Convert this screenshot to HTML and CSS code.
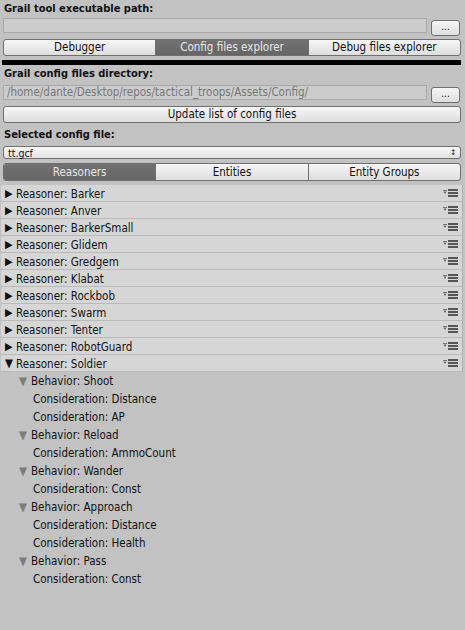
FILE: index.html
```html
<!DOCTYPE html>
<html>
<head>
<meta charset="utf-8">
<link rel="stylesheet" href="styles.css">
</head>
<body>
<div class="page">
  <div class="label lbl1">Grail tool executable path:</div>
  <div class="pathrow r1">
    <div class="field"></div>
    <div class="btn small">...</div>
  </div>
  <div class="toolbar tb1">
    <div class="seg first">Debugger</div>
    <div class="seg on">Config files explorer</div>
    <div class="seg last">Debug files explorer</div>
  </div>
  <div class="blackbar"></div>
  <div class="label lbl2">Grail config files directory:</div>
  <div class="pathrow r2">
    <div class="field dim">/home/dante/Desktop/repos/tactical_troops/Assets/Config/</div>
    <div class="btn small">...</div>
  </div>
  <div class="btn wide">Update list of config files</div>
  <div class="label lbl3">Selected config file:</div>
  <div class="dropdown"><span>tt.gcf</span><span class="arrows">&#8597;</span></div>
  <div class="toolbar tb2">
    <div class="seg first on">Reasoners</div>
    <div class="seg">Entities</div>
    <div class="seg last">Entity Groups</div>
  </div>
  <div class="list">
    <div class="row"><span class="tri">&#9654;</span><span class="name">Reasoner: Barker</span><svg class="menu" width="15" height="8" viewBox="0 0 15 8"><rect x="0" y="1" width="4" height="1" fill="#777"/><path d="M0.5 2.5H3.5L2 5Z" fill="#666"/><rect x="5" y="0" width="10" height="2" fill="#555"/><rect x="5" y="3" width="10" height="2" fill="#555"/><rect x="5" y="6" width="10" height="2" fill="#555"/></svg></div>
    <div class="row"><span class="tri">&#9654;</span><span class="name">Reasoner: Anver</span><svg class="menu" width="15" height="8" viewBox="0 0 15 8"><rect x="0" y="1" width="4" height="1" fill="#777"/><path d="M0.5 2.5H3.5L2 5Z" fill="#666"/><rect x="5" y="0" width="10" height="2" fill="#555"/><rect x="5" y="3" width="10" height="2" fill="#555"/><rect x="5" y="6" width="10" height="2" fill="#555"/></svg></div>
    <div class="row"><span class="tri">&#9654;</span><span class="name">Reasoner: BarkerSmall</span><svg class="menu" width="15" height="8" viewBox="0 0 15 8"><rect x="0" y="1" width="4" height="1" fill="#777"/><path d="M0.5 2.5H3.5L2 5Z" fill="#666"/><rect x="5" y="0" width="10" height="2" fill="#555"/><rect x="5" y="3" width="10" height="2" fill="#555"/><rect x="5" y="6" width="10" height="2" fill="#555"/></svg></div>
    <div class="row"><span class="tri">&#9654;</span><span class="name">Reasoner: Glidem</span><svg class="menu" width="15" height="8" viewBox="0 0 15 8"><rect x="0" y="1" width="4" height="1" fill="#777"/><path d="M0.5 2.5H3.5L2 5Z" fill="#666"/><rect x="5" y="0" width="10" height="2" fill="#555"/><rect x="5" y="3" width="10" height="2" fill="#555"/><rect x="5" y="6" width="10" height="2" fill="#555"/></svg></div>
    <div class="row"><span class="tri">&#9654;</span><span class="name">Reasoner: Gredgem</span><svg class="menu" width="15" height="8" viewBox="0 0 15 8"><rect x="0" y="1" width="4" height="1" fill="#777"/><path d="M0.5 2.5H3.5L2 5Z" fill="#666"/><rect x="5" y="0" width="10" height="2" fill="#555"/><rect x="5" y="3" width="10" height="2" fill="#555"/><rect x="5" y="6" width="10" height="2" fill="#555"/></svg></div>
    <div class="row"><span class="tri">&#9654;</span><span class="name">Reasoner: Klabat</span><svg class="menu" width="15" height="8" viewBox="0 0 15 8"><rect x="0" y="1" width="4" height="1" fill="#777"/><path d="M0.5 2.5H3.5L2 5Z" fill="#666"/><rect x="5" y="0" width="10" height="2" fill="#555"/><rect x="5" y="3" width="10" height="2" fill="#555"/><rect x="5" y="6" width="10" height="2" fill="#555"/></svg></div>
    <div class="row"><span class="tri">&#9654;</span><span class="name">Reasoner: Rockbob</span><svg class="menu" width="15" height="8" viewBox="0 0 15 8"><rect x="0" y="1" width="4" height="1" fill="#777"/><path d="M0.5 2.5H3.5L2 5Z" fill="#666"/><rect x="5" y="0" width="10" height="2" fill="#555"/><rect x="5" y="3" width="10" height="2" fill="#555"/><rect x="5" y="6" width="10" height="2" fill="#555"/></svg></div>
    <div class="row"><span class="tri">&#9654;</span><span class="name">Reasoner: Swarm</span><svg class="menu" width="15" height="8" viewBox="0 0 15 8"><rect x="0" y="1" width="4" height="1" fill="#777"/><path d="M0.5 2.5H3.5L2 5Z" fill="#666"/><rect x="5" y="0" width="10" height="2" fill="#555"/><rect x="5" y="3" width="10" height="2" fill="#555"/><rect x="5" y="6" width="10" height="2" fill="#555"/></svg></div>
    <div class="row"><span class="tri">&#9654;</span><span class="name">Reasoner: Tenter</span><svg class="menu" width="15" height="8" viewBox="0 0 15 8"><rect x="0" y="1" width="4" height="1" fill="#777"/><path d="M0.5 2.5H3.5L2 5Z" fill="#666"/><rect x="5" y="0" width="10" height="2" fill="#555"/><rect x="5" y="3" width="10" height="2" fill="#555"/><rect x="5" y="6" width="10" height="2" fill="#555"/></svg></div>
    <div class="row"><span class="tri">&#9654;</span><span class="name">Reasoner: RobotGuard</span><svg class="menu" width="15" height="8" viewBox="0 0 15 8"><rect x="0" y="1" width="4" height="1" fill="#777"/><path d="M0.5 2.5H3.5L2 5Z" fill="#666"/><rect x="5" y="0" width="10" height="2" fill="#555"/><rect x="5" y="3" width="10" height="2" fill="#555"/><rect x="5" y="6" width="10" height="2" fill="#555"/></svg></div>
    <div class="row"><span class="tri open">&#9660;</span><span class="name">Reasoner: Soldier</span><svg class="menu" width="15" height="8" viewBox="0 0 15 8"><rect x="0" y="1" width="4" height="1" fill="#777"/><path d="M0.5 2.5H3.5L2 5Z" fill="#666"/><rect x="5" y="0" width="10" height="2" fill="#555"/><rect x="5" y="3" width="10" height="2" fill="#555"/><rect x="5" y="6" width="10" height="2" fill="#555"/></svg></div>
  </div>
  <div class="children">
    <div class="beh"><span class="ctri">&#9660;</span>Behavior: Shoot</div>
    <div class="con">Consideration: Distance</div>
    <div class="con">Consideration: AP</div>
    <div class="beh"><span class="ctri">&#9660;</span>Behavior: Reload</div>
    <div class="con">Consideration: AmmoCount</div>
    <div class="beh"><span class="ctri">&#9660;</span>Behavior: Wander</div>
    <div class="con">Consideration: Const</div>
    <div class="beh"><span class="ctri">&#9660;</span>Behavior: Approach</div>
    <div class="con">Consideration: Distance</div>
    <div class="con">Consideration: Health</div>
    <div class="beh"><span class="ctri">&#9660;</span>Behavior: Pass</div>
    <div class="con">Consideration: Const</div>
  </div>
</div>
</body>
</html>
```
FILE: styles.css
```css
html, body {
  margin: 0;
  padding: 0;
  background: #c2c2c2;
}
body {
  width: 465px;
  height: 630px;
  overflow: hidden;
  font-family: "DejaVu Sans Condensed", "DejaVu Sans", sans-serif;
  font-size: 11.5px;
  color: #111;
}
.page {
  display: flex;
  flex-direction: column;
  padding: 0 4px 0 3px;
}
.label {
  font-weight: bold;
  font-size: 11px;
  height: 14px;
  line-height: 14px;
  padding-left: 1px;
}
.lbl1 { margin-top: 2px; }
.lbl2 { margin-top: 2px; }
.lbl3 { margin-top: 5px; }
.pathrow {
  display: flex;
  align-items: flex-start;
  gap: 4px;
}
.r1 { margin-top: 2px; }
.r2 { margin-top: 4px; }
.field {
  flex: 1;
  height: 13px;
  line-height: 13px;
  border: 1px solid #a9a9a9;
  background: #cccccc;
  padding-left: 3px;
  overflow: hidden;
  white-space: nowrap;
}
.field.dim { color: #777; }
.btn {
  box-sizing: border-box;
  border: 1px solid #6f6f6f;
  border-radius: 3px;
  background: linear-gradient(#f6f6f6, #dedede);
  text-align: center;
}
.btn.small {
  width: 29px;
  height: 16px;
  line-height: 12px;
  font-size: 10px;
  margin-top: 2px;
  margin-right: 1px;
}
.btn.wide {
  margin-top: 3px;
  height: 17px;
  line-height: 15px;
}
.toolbar {
  display: flex;
  height: 17px;
  box-sizing: border-box;
  border: 1px solid #6f6f6f;
  border-radius: 3px;
  overflow: hidden;
  background: linear-gradient(#f6f6f6, #dedede);
}
.tb1 { margin-top: 3px; }
.tb2 { margin-top: 4px; height: 18px; }
.seg {
  flex: 1;
  text-align: center;
  line-height: 15px;
  border-left: 1px solid #6f6f6f;
}
.tb2 .seg { line-height: 16px; }
.seg.first { border-left: none; }
.seg.on {
  background: linear-gradient(#727272, #666666);
  color: #e6e6e6;
}
.blackbar {
  height: 5px;
  background: #000;
  margin-top: 4px;
  margin-left: -1px;
}
.dropdown {
  margin-top: 4px;
  height: 13px;
  box-sizing: border-box;
  border: 1px solid #6f6f6f;
  border-radius: 3px;
  background: linear-gradient(#f8f8f8, #e2e2e2);
  display: flex;
  justify-content: space-between;
  align-items: center;
  padding: 0 4px 0 4px;
  font-size: 10.5px;
}
.arrows { font-size: 8px; }
.list {
  margin-top: 4px;
  margin-left: -2px;
  margin-right: -2px;
  display: flex;
  flex-direction: column;
}
.row {
  height: 17px;
  box-sizing: border-box;
  padding-top: 1px;
  background: #d6d6d6;
  border-bottom: 1px solid #bababa;
  border-right: 1px solid #b0b0b0;
  border-radius: 2px 0 0 2px;
  display: flex;
  align-items: center;
}
.tri {
  width: 11px;
  padding-left: 4px;
  font-size: 11px;
  line-height: 15px;
}
.tri.open { font-size: 11.5px; }
.name { flex: 1; }
.menu { margin-right: 4px; margin-top: -1px; }
.children {
  display: flex;
  flex-direction: column;
}
.beh, .con {
  height: 18px;
  line-height: 18px;
}
.beh { padding-left: 16px; }
.con { padding-left: 30px; }
.ctri {
  color: #7c7c7c;
  font-size: 11.5px;
  display: inline-block;
  width: 12px;
}
```
